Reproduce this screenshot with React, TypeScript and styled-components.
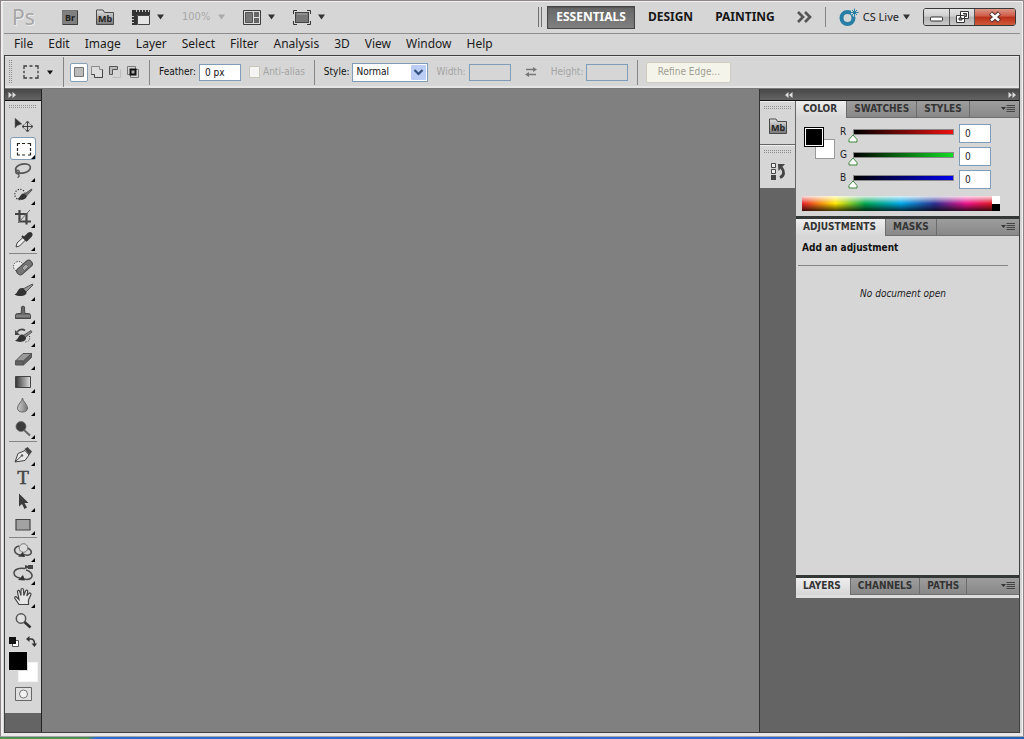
import React, { useState } from 'react';
import styled, { createGlobalStyle, css } from 'styled-components';

const ui = '"DejaVu Sans Condensed", "DejaVu Sans", Verdana, sans-serif';
const menuFont = '"Noto Sans", "Open Sans", Tahoma, sans-serif';

const GlobalStyle = createGlobalStyle`
  *, *::before, *::after { box-sizing: border-box; }
  body { margin: 0; background: #d6d6d6; color: #1b1b1b; font-family: ${ui}; font-size: 10px; }
  button, input, select { font: inherit; color: inherit; margin: 0; padding: 0; border: 0; background: none; border-radius: 0; }
  svg { display: block; flex: none; }
  h2, p { margin: 0; }
`;

/* ---------- window frame ---------- */

const Desktop = styled.div`
  min-height: 100vh;
  display: flex;
  flex-direction: column;
  padding-bottom: 2px;
  background: linear-gradient(90deg, #4f9153 0 88px, #2a6bd0 96px, #3468cf 84%, #1f62b8 94%);
`;

const Frame = styled.div`
  flex: 1;
  display: flex;
  flex-direction: column;
  padding: 2px 3px 3px 3px;
  background: #d6d6d6;
  border: 1px solid #8b8489;
  border-bottom-color: #a5a5a5;
  box-shadow: inset 0 1px 0 #f1f1f1, inset 2px 0 0 #efedee, inset -1px 0 0 #f2f2f2, inset 0 -3px 0 #e9e7e8;
`;

const TitleBar = styled.header`
  display: flex;
  align-items: center;
  justify-content: space-between;
  height: 31px;
  padding: 0 4px 2px 8px;
  border-bottom: 1px solid #8d8d8d;
`;

const TitleGroup = styled.div<{ $gap: number }>`
  display: flex;
  align-items: center;
  gap: ${p => p.$gap}px;
`;

const Logo = styled.span`
  width: 32px;
  font-family: ${menuFont};
  font-size: 21px;
  line-height: 24px;
  color: #a6a6a6;
  text-shadow: 1px 1px 0 #eee;
`;

const IconButton = styled.button`
  display: flex;
  align-items: center;
  gap: 7px;
`;

const SwapButton = styled(IconButton)`
  padding: 0 5px;
`;

const Zoom = styled.button`
  display: flex;
  align-items: center;
  gap: 8px;
  font-size: 11px;
  line-height: 16px;
  color: #a9a9a9;
`;

const WorkspaceButton = styled.button<{ $active?: boolean }>`
  height: 23px;
  padding: 0 8px;
  font-family: ${menuFont};
  font-size: 12px;
  line-height: 20px;
  font-weight: 700;
  color: #171717;
  border: 1px solid transparent;
  ${p => p.$active && css`
    color: #fff;
    border-color: #444;
    background: linear-gradient(#666, #808080);
    box-shadow: inset 0 1px 1px #555;
  `}
`;

const DoubleRule = styled.span`
  width: 4px;
  height: 20px;
  margin-right: 1px;
  border: solid #707070;
  border-width: 0 1px;
`;

const Rule = styled.span<{ $h: number }>`
  width: 1px;
  height: ${p => p.$h}px;
  background: #858585;
`;

const LiveButton = styled.button`
  display: flex;
  align-items: center;
  gap: 4px;
  font-family: ${menuFont};
  font-size: 11px;
  line-height: 18px;
`;

const WindowControls = styled.div`
  display: flex;
  height: 18px;
  border: 1px solid #383838;
  border-radius: 3px;
  overflow: hidden;
`;

const WindowButton = styled.button<{ $close?: boolean }>`
  display: grid;
  place-items: center;
  width: ${p => (p.$close ? 41 : 25)}px;
  background: ${p => (p.$close
    ? 'linear-gradient(#dc9686, #cf5a45 45%, #b92e18 50%, #d05a3c)'
    : 'linear-gradient(#e2e2e2, #cfcfcf 45%, #b2b2b2 50%, #c9c9c9)')};
  & + & { border-left: 1px solid #555; }
`;

const MenuBar = styled.nav`
  display: flex;
  align-items: center;
  gap: 15px;
  height: 21px;
  padding: 0 10px 2px;
  font-family: ${menuFont};
  font-size: 12px;
  line-height: 18px;
`;

const MenuItem = styled.button``;

/* ---------- options bar ---------- */

const Workspace = styled.div`
  flex: 1;
  display: flex;
  flex-direction: column;
  border: 1px solid #3f3f3f;
`;

const OptionsBar = styled.section`
  display: flex;
  align-items: center;
  gap: 6px;
  height: 33px;
  padding: 0 4px;
  border-bottom: 1px solid #7a7a7a;
  box-shadow: inset 0 1px 0 #e4e4e4, inset 0 -2px 0 #e4e4e4;
  line-height: 14px;
`;

const Grip = styled.span<{ $vertical?: boolean }>`
  width: ${p => (p.$vertical ? 4 : 28)}px;
  height: ${p => (p.$vertical ? 24 : 4)}px;
  background-image: linear-gradient(90deg, #8f8f8f 1px, transparent 1px);
  background-size: 2px 2px;
  -webkit-mask: repeating-linear-gradient(#000 0 1px, transparent 1px 2px);
  mask: repeating-linear-gradient(#000 0 1px, transparent 1px 2px);
`;

const Preset = styled.button`
  display: flex;
  align-items: center;
  justify-content: center;
  gap: 8px;
  width: 38px;
  height: 24px;
`;

const ModeGroup = styled.div`
  display: flex;
  padding-right: 1px;
`;

const ModeButton = styled.button<{ $active?: boolean }>`
  display: grid;
  place-items: center;
  width: 18px;
  height: 19px;
  border-radius: 2px;
  border: 1px solid ${p => (p.$active ? '#86a0b8' : 'transparent')};
  background: ${p => (p.$active ? '#fff' : 'none')};
`;

const FieldGroup = styled.div`
  display: flex;
  align-items: center;
  gap: 8px;
  padding: 0 3px;
`;

const Field = styled.label<{ $disabled?: boolean }>`
  display: flex;
  align-items: center;
  gap: 3px;
  color: ${p => (p.$disabled ? '#a4a4a4' : '#111')};
`;

const TextBox = styled.input`
  width: 42px;
  height: 17px;
  padding: 0 5px;
  background: #fff;
  border: 1px solid #7f9db9;
  color: #111;
  &:disabled { background: #d6d6d6; }
`;

const CheckBox = styled.input`
  appearance: none;
  width: 11px;
  height: 12px;
  background: #f4f4f2;
  border: 1px solid #cac8bb;
`;

const SelectWrap = styled.span`
  display: grid;
  align-items: center;
  width: 76px;
  height: 19px;
  background: #fff;
  border: 1px solid #7f9db9;
  & > * { grid-area: 1 / 1; }
  & > svg { justify-self: end; margin-right: 1px; pointer-events: none; }
`;

const Select = styled.select`
  appearance: none;
  width: 100%;
  height: 17px;
  padding: 0 20px 0 3px;
  color: #111;
`;

const RefineButton = styled.button`
  width: 85px;
  height: 21px;
  margin-left: 2px;
  background: #f5f4ea;
  border: 1px solid #cfcdbd;
  border-radius: 2px;
  color: #a09f93;
`;

/* ---------- main area ---------- */

const Main = styled.main`
  flex: 1;
  display: grid;
  grid-template-columns: 37px minmax(0, 1fr) 260px;
`;

const Canvas = styled.section`
  background: #808080;
`;

const ToolDock = styled.aside`
  background: #646464;
  border-right: 1px solid #222;
`;

const DockHeader = styled.button<{ $end?: boolean }>`
  display: flex;
  align-items: center;
  justify-content: ${p => (p.$end ? 'flex-end' : 'flex-start')};
  width: 100%;
  height: 12px;
  padding: 0 3px;
  background: linear-gradient(#484848, #636363);
  border-bottom: 1px solid #111;
`;

const ToolPanel = styled.div`
  display: flex;
  flex-direction: column;
  align-items: center;
  padding: 4px 0 12px;
  background: #d6d6d6;
`;

const ToolList = styled.div`
  display: flex;
  flex-direction: column;
  padding-top: 5px;
`;

const ToolButton = styled.button<{ $active?: boolean }>`
  width: 26px;
  height: 23px;
  border-radius: 3px;
  ${p => p.$active && css`
    background: #fff;
    box-shadow: inset 0 0 0 1px #809cb5;
  `}
`;

const ToolRule = styled.hr`
  width: 28px;
  height: 1px;
  margin: 1px -1px 2px;
  border: 0;
  background: #858585;
`;

const SwatchBar = styled.div`
  display: flex;
  justify-content: space-between;
  width: 28px;
  height: 19px;
  padding: 4px 0;
`;

const Swatches = styled.div<{ $small?: boolean }>`
  position: relative;
  width: ${p => (p.$small ? 31 : 30)}px;
  height: ${p => (p.$small ? 32 : 31)}px;
`;

const Swatch = styled.button<{ $front?: boolean; $outlined?: boolean }>`
  position: absolute;
  width: 20px;
  height: 20px;
  ${p => (p.$front
    ? css`top: 0; left: 0; background: #000; border: 1px solid #ddd;`
    : css`bottom: 0; right: 0; background: #fff; border: 1px solid ${p.$outlined ? '#999' : '#f4f4f4'};`)}
  ${p => p.$front && p.$outlined && css`border-color: #000; box-shadow: inset 0 0 0 1px #fff;`}
`;

const MaskButton = styled.button`
  margin-top: 5px;
`;

const RightDock = styled.aside`
  display: flex;
  flex-direction: column;
  background: #646464;
  border-left: 1px solid #333;
`;

const DockHeaders = styled.div`
  display: grid;
  grid-template-columns: 36px 1fr;
`;

const DockColumns = styled.div`
  display: grid;
  grid-template-columns: 35px minmax(0, 1fr);
  column-gap: 1px;
  align-items: start;
`;

const IconStrip = styled.div`
  display: flex;
  flex-direction: column;
  gap: 1px;
`;

const IconCell = styled.div`
  display: flex;
  flex-direction: column;
  align-items: center;
  gap: 8px;
  height: 43px;
  padding-top: 4px;
  background: #d6d6d6;
  border-top: 1px solid #f0f0f0;
`;

const Panels = styled.div`
  display: flex;
  flex-direction: column;
  gap: 3px;
  background: #333836;
`;

const Panel = styled.section`
  background: #d6d6d6;
`;

const TabRow = styled.div`
  display: flex;
  height: 17px;
  background: linear-gradient(#9d9d9d, #888);
  border-bottom: 1px solid #707070;
`;

const Tab = styled.button<{ $active?: boolean }>`
  height: 17px;
  padding: 0 7px 1px;
  font-weight: 700;
  line-height: 14px;
  color: #343434;
  border-right: 1px solid #6c6c6c;
  ${p => p.$active && css`background: linear-gradient(#eee, #d6d6d6); padding-right: 9px;`}
`;

const TabMenu = styled.button`
  margin-left: auto;
  padding-right: 4px;
`;

const ColorBody = styled.div`
  padding: 6px 19px 5px 6px;
`;

const ColorControls = styled.div`
  display: grid;
  grid-template-columns: 31px 1fr;
  gap: 5px;
  padding: 3px 9px 0 2px;
`;

const ChannelList = styled.div`
  display: flex;
  flex-direction: column;
`;

const Channel = styled.div`
  display: grid;
  grid-template-columns: 11px minmax(0, 1fr) 32px;
  column-gap: 4px;
  height: 23px;
  margin-top: -3px;
  margin-bottom: 3px;
`;

const ChannelLabel = styled.label`
  line-height: 15px;
`;

const SliderBox = styled.div<{ $color: string }>`
  position: relative;
  height: 15px;
  margin: 5px 1px 0 -2px;
  &::before {
    content: '';
    display: block;
    height: 6px;
    border: 1px solid #888;
    background: linear-gradient(90deg, #000, ${p => p.$color});
  }
`;

const Range = styled.input`
  position: absolute;
  inset: 0;
  width: 100%;
  height: 100%;
  opacity: 0;
`;

const Thumb = styled.svg`
  position: absolute;
  top: 5px;
  margin-left: -5px;
  pointer-events: none;
`;

const ChannelBox = styled.input`
  width: 32px;
  height: 19px;
  padding: 0 5px;
  background: #fff;
  border: 1px solid #7f9db9;
`;

const Spectrum = styled.div`
  display: flex;
  height: 15px;
  background:
    linear-gradient(rgba(255,255,255,.85), rgba(255,255,255,0) 50%, rgba(0,0,0,0) 50%, rgba(0,0,0,.75)),
    linear-gradient(90deg, #e8202a, #ffe800 17%, #00a651 32%, #00a9e8 50%, #2e3192 67%, #ec148c 83%, #e01a24 96%);
`;

const Extremes = styled.span`
  width: 8px;
  margin-left: auto;
  background: linear-gradient(#fff 50%, #000 50%);
`;

const AdjustmentBody = styled.div`
  min-height: 339px;
  padding: 4px 11px 0 2px;
`;

const AdjustmentTitle = styled.h2`
  padding: 0 4px 10px;
  font-size: 10px;
  line-height: 15px;
  color: #111;
  border-bottom: 1px solid #858585;
`;

const EmptyNote = styled.p`
  padding-top: 20px;
  line-height: 16px;
  font-style: italic;
  text-align: center;
`;

const LayersFoot = styled.div`
  height: 3px;
  background: #dedede;
`;

/* ---------- icons ---------- */

const Caret = ({ color = '#333', w = 7 }: { color?: string; w?: number }) => (
  <svg width={w} height={w - 1} viewBox="0 0 8 6" preserveAspectRatio="none"><path d="M0 .5h8L4 5.5z" fill={color} /></svg>
);

const DoubleArrow = ({ left }: { left?: boolean }) => (
  <svg width="8" height="6" viewBox="0 0 8 6">
    <path d={left ? 'M3.5 0v6L0 3zM7.5 0v6L4 3z' : 'M.5 0v6L4 3zM4.5 0v6L8 3z'} fill="#ddd" />
  </svg>
);

const BridgeIcon = () => (
  <svg width="16" height="15" viewBox="0 0 16 15">
    <rect x=".5" y=".5" width="15" height="14" fill="#808080" stroke="#777" />
    <path d="M1 14.5h14.5V1" fill="none" stroke="#3c3c3c" />
    <text x="8" y="11" textAnchor="middle" fontSize="9" fontWeight="700" fontFamily={menuFont} fill="#1e1e1e">Br</text>
  </svg>
);

const MiniBridgeIcon = () => (
  <svg width="18" height="17" viewBox="0 0 18 17">
    <defs><linearGradient id="mb" x2="0" y2="1"><stop stopColor="#e2e2e2" /><stop offset="1" stopColor="#777" /></linearGradient></defs>
    <path d="M.5 15.5V1h6.500l1.500 2.500h9v12z" fill="url(#mb)" stroke="#4a4a4a" />
    <text x="9" y="12.500" textAnchor="middle" fontSize="9" fontWeight="700" fontFamily={menuFont} fill="#222">Mb</text>
  </svg>
);

const ExtrasIcon = () => (
  <svg width="18" height="15" viewBox="0 0 18 15">
    <path d="M0 0h18v5H5v10H0z" fill="#333" />
    <path d="M5.500 5.500h12v9h-12z" fill="#e4e4e4" stroke="#444" />
    <path d="M4.500 0v2M7.500 0v2M10.500 0v2M13.500 0v2M16.500 0v2M0 6.500h2M0 9.500h2M0 12.500h2" stroke="#ccc" />
  </svg>
);

const ArrangeIcon = () => (
  <svg width="18" height="15" viewBox="0 0 18 15">
    <path d="M.5.500h17v14H.500z" fill="#dedede" stroke="#3b3b3b" />
    <path d="M2.500 2.500h7v10h-7z" fill="#777" stroke="#555" />
    <path d="M11 2h5v5h-5zM11 8h5v5h-5z" fill="#666" />
  </svg>
);

const ScreenIcon = () => (
  <svg width="18" height="15" viewBox="0 0 18 15">
    <path d="M.5 4V.500H4M14 .500h3.500V4M17.500 11v3.500H14M4 14.500H.500V11" fill="none" stroke="#333" />
    <rect x="2.500" y="2.500" width="13" height="10" fill="#777" stroke="#444" />
    <path d="M4 4h10" stroke="#aaa" />
  </svg>
);

const LiveIcon = () => (
  <svg width="20" height="19" viewBox="0 0 20 19">
    <circle cx="8.500" cy="10" r="6" fill="none" stroke="#287fa5" strokeWidth="4" />
    <path d="M15.500.500v8M12 4.500h7M13 2l5 5M18 2l-5 5" stroke="#d6d6d6" strokeWidth="3" />
    <path d="M15.500.500v8M12 4.500h7.500M13 2l5 5M18 2l-5 5" stroke="#287fa5" />
  </svg>
);

const MarqueeIcon = () => (
  <svg width="16" height="14" viewBox="0 0 16 14">
    <path d="M1 4V1h3M6.500 1h3M12 1h3v3M15 5.800v2.400M15 10v3h-3M9.500 13h-3M4 13H1v-3M1 8.200V5.800" fill="none" stroke="#3d3d3d" strokeWidth="1.300" />
  </svg>
);

const modeDefs = [
  { name: 'New selection', art: <path d="M2.500 2.500h9v9h-9z" fill="#bbb" stroke="#777" /> },
  { name: 'Add to selection', art: <><path d="M1.500 1.500h8v3h3v8h-8v-3h-3z" fill="#ddd" stroke="#8a8a8a" /><path d="M1.500 9.500h3v3h8v-8" fill="none" stroke="#444" /></> },
  { name: 'Subtract from selection', art: <><path d="M1.500 9.500v-8h8v3h-5v5z" fill="#bbb" stroke="#555" /><path d="M4.500 12.500h8v-8" fill="none" stroke="#bcbcbc" /></> },
  { name: 'Intersect with selection', art: <><path d="M1.500 1.500h8v8h-8zM4.500 4.500h8v8h-8z" fill="none" stroke="#777" /><path d="M4.500 4.500h5v5h-5z" fill="#aaa" stroke="#111" strokeWidth="2" /></> },
];

const TabMenuIcon = () => (
  <svg width="14" height="9" viewBox="0 0 14 9">
    <path d="M0 2h5L2.500 5z" fill="#333" /><path d="M5.500.500h8.500M5.500 2.500h8.500M5.500 4.500h8.500M5.500 6.500h8.500" stroke="#444" />
  </svg>
);

const HistoryIcon = () => (
  <svg width="16" height="18" viewBox="0 0 16 18">
    <path d="M1.500 1.500h4v4h-4zM1.500 7.500h4v4h-4z" fill="#f0f0f0" stroke="#444" />
    <path d="M1 13h5v5H1z" fill="#444" />
    <path d="M10 15.500c4.500-2 4.500-6 1.500-10" fill="none" stroke="#444" strokeWidth="2.800" />
    <path d="M8 2h7l-6.500 7z" fill="#444" />
  </svg>
);

const dark = '#3e3e3e';

const tools: ({ name: string; art: React.ReactNode; single?: boolean } | null)[] = [
  { name: 'Move', single: true, art: <><path d="M5 4v10l2.500-2.500L12 10z" fill="#333" stroke="#777" strokeWidth=".5" /><path d="M17.500 8v9M13 12.500h9" stroke={dark} strokeWidth="1.200" /><path d="M15.500 9.500l2-2.500 2 2.500M15.500 15.500l2 2.500 2-2.500M14.500 10.500l-2.500 2 2.500 2M20.500 10.500l2.500 2-2.500 2" fill="none" stroke={dark} /></> },
  { name: 'Rectangular Marquee', art: <path d="M7.500 9V6.500H10M12 6.500h3M17.500 6.500H20.500V9M20.500 11v3M20.500 15.500V18H18M15 18h-3M10 18H7.500v-2.500M7.500 14v-3" fill="none" stroke="#222" strokeWidth="1.200" /> },
  { name: 'Lasso', art: <><ellipse cx="13" cy="8.500" rx="7.500" ry="4.500" transform="rotate(-12 13 8.500)" fill="none" stroke="#555" strokeWidth="1.700" /><circle cx="7.500" cy="12" r="1.800" fill="none" stroke="#555" strokeWidth="1.300" /><path d="M8 13.500c2 2 1 3.500-.5 4" fill="none" stroke="#555" strokeWidth="1.300" /></> },
  { name: 'Quick Selection', art: <><circle cx="10" cy="11.500" r="5.200" fill="none" stroke="#333" strokeWidth="1.200" strokeDasharray="1.200 1.500" /><path d="M21.500 6l-7.500 5.500 2 2L22 7z" fill="#777" stroke="#444" strokeWidth=".8" /><path d="M14 10.500c-4-.5-3 4-7 5.500 5 2 10.500 0 9.500-3.500z" fill="#333" /></> },
  { name: 'Crop', art: <><path d="M9.500 4v11.500H21M5 8h11.500v10.500" fill="none" stroke="#444" strokeWidth="2.200" /><path d="M8 17L20 4" stroke="#666" /></> },
  { name: 'Eyedropper', art: <><path d="M6 18l1-4 6.500-6 2.500 2.500L9.500 17z" fill="#eee" stroke="#444" /><path d="M12 7l5 5M14.500 8.500l4-4c2.500-1.500 4 1 2.500 2.500l-4 4z" fill="#333" stroke="#333" strokeWidth="2" /></> },
  null,
  { name: 'Spot Healing Brush', art: <><circle cx="8.500" cy="10.500" r="5" fill="#eaeaea" stroke="#333" strokeDasharray="1.200 1.400" /><rect x="5.500" y="8" width="18" height="7" rx="3" transform="rotate(-41 14.500 11.500)" fill="#777" stroke="#4a4a4a" /><path d="M12 12l4-4 2.500 2.500-4 4z" fill="#aaa" stroke="#555" strokeWidth=".7" /></> },
  { name: 'Brush', art: <><path d="M22.500 5L13 10l2.500 3.500L23 6z" fill="#999" stroke="#555" /><path d="M13 9c-6-.5-4.500 5-8.500 6.500 5 3 12.500 1.500 12-2.500z" fill="#333" /></> },
  { name: 'Clone Stamp', art: <><path d="M5.500 13.500q0-2 2-2h3.500L11.500 8q-1-4 1.500-4t1.500 4l.5 3.500h3.500q2 0 2 2v3h-15z" fill="#686868" stroke="#474747" /><path d="M6 14h14" stroke="#999" /></> },
  { name: 'History Brush', art: <><path d="M21 5.500L12.500 11l2 2 7.500-6z" fill="#888" stroke="#444" strokeWidth=".8" /><path d="M13 9.500c-5-1-3.500 4.500-8 6 5 3 11.500 1 11-3z" fill="#333" /><path d="M7 7c3-3.500 6-3 8-1.500" fill="none" stroke="#444" strokeWidth="1.700" /><path d="M5 5v5h5z" fill="#444" /><path d="M19.500 11c1 4-1 6-5 6" fill="none" stroke="#333" strokeDasharray="1 1.500" /></> },
  { name: 'Eraser', art: <><path d="M5.500 13L13 5.500h8.500L13.500 13z" fill="#999" stroke="#555" /><path d="M5.500 13h8v4h-8zM13.500 13L21.500 5.500v4L13.500 17z" fill="#606060" stroke="#555" /></> },
  { name: 'Gradient', art: <><defs><linearGradient id="grad"><stop stopColor="#333" /><stop offset="1" stopColor="#e2e2e2" /></linearGradient></defs><path d="M5.500 5.500h15v11h-15z" fill="url(#grad)" stroke="#444" /></> },
  { name: 'Blur', art: <><defs><linearGradient id="drop"><stop stopColor="#ccc" /><stop offset="1" stopColor="#777" /></linearGradient></defs><path d="M12.500 4c0 3-5 6.500-5 10 0 2.500 2 4 5 4s5-1.500 5-4c0-3.500-5-7-5-10z" fill="url(#drop)" stroke="#666" /></> },
  { name: 'Dodge', art: <><path d="M14 13l6 5.500" stroke="#666" strokeWidth="2" /><circle cx="11" cy="9.500" r="5" fill="#3c3c3c" stroke="#666" strokeWidth=".7" /></> },
  null,
  { name: 'Pen', art: <><path d="M5 18l3-8.500 7-3 4 4.500-4 5.500z" fill="#e8e8e8" stroke="#444" /><path d="M5.500 17.500l6-5.500" stroke="#444" /><circle cx="12" cy="11.500" r="1.200" fill="#555" /><path d="M14.500 5l3-2 4.500 4.500L19.500 11z" fill="#444" /></> },
  { name: 'Type', art: <text x="13" y="17" textAnchor="middle" fontSize="19" fontFamily='"Liberation Serif", serif' fill="#444" stroke="#444" strokeWidth=".5">T</text> },
  { name: 'Path Selection', art: <path d="M9 3.500v13l3-2.500 2.500 5 2.500-1.500-2.500-4.500h4z" fill="#3c3c3c" /> },
  { name: 'Rectangle', art: <path d="M6 6.500h14v10.500H6z" fill="#a2a2a2" stroke="#444" strokeWidth="1.200" /> },
  null,
  { name: '3D Object Rotate', art: <><path d="M9 6c-6 1.500-6 7.500 1 9M17.500 8c6 3 5 9-4 6.500" fill="none" stroke="#4b4b4b" strokeWidth="1.600" /><circle cx="13.500" cy="8" r="4.300" fill="#ddd" stroke="#777" /><path d="M8 16.500l5-4.500 2 5z" fill="#333" /></> },
  { name: '3D Camera Rotate', art: <><path d="M15 5.500c-7-1-11 1.500-11 4.500 0 2.500 2.500 4.500 6 5M14 16c6 1.500 10-2 7-6-1-1.500-3-2.500-5-3" fill="none" stroke="#4b4b4b" strokeWidth="1.500" /><path d="M8 17l5-5 2 5.500z" fill="#333" /><path d="M15 2l3 1V2h5v4h-5V5l-3 1z" fill="#444" /></> },
  { name: 'Hand', art: <path d="M9 18.500l-4-6c-1-2 1-2.500 2-1l2 2L7.500 6c-.3-2 2-2 2.300-.3L11 9.500 11 4c0-2 2.300-2 2.500 0l.3 5.500L15.500 5c.5-1.700 2.500-1 2.200.6L16.800 10l2-2.500c1.200-1.200 2.700 0 2 1.500L18.500 14v4.500z" fill="#e6e6e6" stroke="#444" strokeWidth="1.200" /> },
  { name: 'Zoom', single: true, art: <><circle cx="11" cy="9.500" r="4.700" fill="#e2e2e2" stroke="#555" strokeWidth="1.500" /><path d="M14.500 13l6 5.500" stroke="#333" strokeWidth="2.600" /></> },
];

/* ---------- parts ---------- */

const menus = ['File', 'Edit', 'Image', 'Layer', 'Select', 'Filter', 'Analysis', '3D', 'View', 'Window', 'Help'];

function ColorChannel({ name, color }: { name: string; color: string }) {
  const [value, setValue] = useState(0);
  const id = `channel-${name}`;
  return (
    <Channel>
      <ChannelLabel htmlFor={id}>{name}</ChannelLabel>
      <SliderBox $color={color}>
        <Range type="range" min={0} max={255} value={value} aria-label={`${name} slider`} onChange={e => setValue(Number(e.target.value))} />
        <Thumb width="10" height="9" viewBox="0 0 10 9" style={{ left: `${(value / 255) * 100}%` }}>
          <path d="M5 1L9 5.500V8H1V5.500z" fill="#fff" stroke="#3b853c" />
        </Thumb>
      </SliderBox>
      <ChannelBox id={id} value={value} onChange={e => setValue(Math.min(255, Number(e.target.value) || 0))} />
    </Channel>
  );
}

function Tabs({ names }: { names: string[] }) {
  return (
    <TabRow role="tablist">
      {names.map((n, i) => <Tab key={n} role="tab" aria-selected={i === 0} $active={i === 0}>{n}</Tab>)}
      <TabMenu aria-label="Panel menu"><TabMenuIcon /></TabMenu>
    </TabRow>
  );
}

export default function App() {
  const [tool, setTool] = useState('Rectangular Marquee');
  const [mode, setMode] = useState('New selection');
  return (
    <Desktop>
      <GlobalStyle />
      <Frame>
        <TitleBar>
          <TitleGroup $gap={18}>
            <Logo>Ps</Logo>
            <IconButton aria-label="Launch Bridge"><BridgeIcon /></IconButton>
            <IconButton aria-label="Launch Mini Bridge"><MiniBridgeIcon /></IconButton>
            <IconButton aria-label="View extras"><ExtrasIcon /><Caret /></IconButton>
            <Zoom>100% <Caret color="#aaa" /></Zoom>
            <IconButton aria-label="Arrange documents"><ArrangeIcon /><Caret /></IconButton>
            <IconButton aria-label="Screen mode"><ScreenIcon /><Caret /></IconButton>
          </TitleGroup>
          <TitleGroup $gap={13}>
            <TitleGroup $gap={4}>
              <DoubleRule />
              <WorkspaceButton $active>ESSENTIALS</WorkspaceButton>
              <WorkspaceButton>DESIGN</WorkspaceButton>
              <WorkspaceButton>PAINTING</WorkspaceButton>
            </TitleGroup>
            <IconButton aria-label="More workspaces">
              <svg width="15" height="12" viewBox="0 0 15 12"><path d="M1 1l5 5-5 5M8 1l5 5-5 5" fill="none" stroke="#555" strokeWidth="2.700" /></svg>
            </IconButton>
            <Rule $h={20} />
            <LiveButton><LiveIcon />CS Live<Caret /></LiveButton>
            <WindowControls>
              <WindowButton aria-label="Minimize">
                <svg width="13" height="9" viewBox="0 0 13 9"><rect x=".5" y="4" width="12" height="4" rx="1" fill="#fff" stroke="#333" /></svg>
              </WindowButton>
              <WindowButton aria-label="Restore">
                <svg width="13" height="12" viewBox="0 0 13 12"><path d="M4.500.500h8v7h-8zM.500 4.500h8v7h-8z" fill="#fff" stroke="#333" /><path d="M3 7h3v2H3zM7 2.500h3.500v3H9" fill="#888" stroke="#333" /></svg>
              </WindowButton>
              <WindowButton $close aria-label="Close">
                <svg width="14" height="12" viewBox="0 0 14 12"><path d="M2.500 2l9 8M11.500 2l-9 8" stroke="#503030" strokeWidth="4.500" /><path d="M3 2.500l8 7M11 2.500l-8 7" stroke="#fff" strokeWidth="2.500" /></svg>
              </WindowButton>
            </WindowControls>
          </TitleGroup>
        </TitleBar>

        <MenuBar aria-label="Main menu">{menus.map(m => <MenuItem key={m}>{m}</MenuItem>)}</MenuBar>

        <Workspace>
          <OptionsBar aria-label="Tool options">
            <Grip $vertical />
            <Preset aria-label="Tool preset"><MarqueeIcon /><Caret w={6} color="#111" /></Preset>
            <Rule $h={30} />
            <ModeGroup>
              {modeDefs.map(m => (
                <ModeButton key={m.name} aria-label={m.name} $active={mode === m.name} onClick={() => setMode(m.name)}>
                  <svg width="14" height="14" viewBox="0 0 14 14">{m.art}</svg>
                </ModeButton>
              ))}
            </ModeGroup>
            <Rule $h={25} />
            <FieldGroup>
              <Field>Feather: <TextBox defaultValue="0 px" /></Field>
              <Field $disabled><CheckBox type="checkbox" disabled /> Anti-alias</Field>
            </FieldGroup>
            <Rule $h={25} />
            <FieldGroup>
              <Field>Style:
                <SelectWrap>
                  <Select defaultValue="Normal"><option>Normal</option><option>Fixed Ratio</option><option>Fixed Size</option></Select>
                  <svg width="15" height="15" viewBox="0 0 15 15"><rect width="15" height="15" rx="1" fill="#bccdf5" /><path d="M3.500 5l4 4 4-4" fill="none" stroke="#33507f" strokeWidth="2.200" /></svg>
                </SelectWrap>
              </Field>
              <Field $disabled>Width: <TextBox disabled /></Field>
            </FieldGroup>
            <SwapButton aria-label="Swap width and height" disabled>
              <svg width="12" height="10" viewBox="0 0 12 10"><path d="M1 2.500h8M3 7.500h8" stroke="#777" strokeWidth="1.300" /><path d="M8 0l4 2.500L8 5zM4 5L0 7.500 4 10z" fill="#777" /></svg>
            </SwapButton>
            <FieldGroup>
              <Field $disabled>Height: <TextBox disabled /></Field>
            </FieldGroup>
            <Rule $h={25} />
            <RefineButton disabled>Refine Edge...</RefineButton>
          </OptionsBar>

          <Main>
            <ToolDock aria-label="Tools">
              <DockHeader aria-label="Expand tools"><DoubleArrow /></DockHeader>
              <ToolPanel>
                <Grip />
                <ToolList>
                  {tools.map((t, i) => (t === null ? <ToolRule key={i} /> : (
                    <ToolButton key={t.name} aria-label={t.name} $active={tool === t.name} onClick={() => setTool(t.name)}>
                      <svg width="26" height="23" viewBox="0 0 26 23">
                        {t.art}
                        {!t.single && <path d="M25 18v4h-4z" fill="#000" />}
                      </svg>
                    </ToolButton>
                  )))}
                </ToolList>
                <SwatchBar>
                  <IconButton aria-label="Default colors">
                    <svg width="10" height="10" viewBox="0 0 10 10"><path d="M3.500 3.500h6v6h-6z" fill="#fff" stroke="#555" /><path d="M0 0h7v7H0z" fill="#111" /></svg>
                  </IconButton>
                  <IconButton aria-label="Swap colors">
                    <svg width="11" height="11" viewBox="0 0 11 11"><path d="M2 3h3q3.500 0 3.500 5" fill="none" stroke="#333" strokeWidth="1.500" /><path d="M3.500 0v6L0 3zM5.500 7.500h5.500L8.500 11z" fill="#333" /></svg>
                  </IconButton>
                </SwatchBar>
                <Swatches>
                  <Swatch aria-label="Background color" />
                  <Swatch $front aria-label="Foreground color" />
                </Swatches>
                <MaskButton aria-label="Quick mask">
                  <svg width="17" height="14" viewBox="0 0 17 14"><path d="M.5.500h16v13H.500z" fill="#e0e0e0" stroke="#666" /><circle cx="8.500" cy="7" r="4" fill="#f2f2f2" stroke="#777" /></svg>
                </MaskButton>
              </ToolPanel>
            </ToolDock>

            <Canvas aria-label="Document area" />

            <RightDock>
              <DockHeaders>
                <DockHeader $end aria-label="Expand dock"><DoubleArrow left /></DockHeader>
                <DockHeader $end aria-label="Collapse panels"><DoubleArrow /></DockHeader>
              </DockHeaders>
              <DockColumns>
                <IconStrip>
                  <IconCell><Grip /><IconButton aria-label="Mini Bridge"><MiniBridgeIcon /></IconButton></IconCell>
                  <IconCell><Grip /><IconButton aria-label="History"><HistoryIcon /></IconButton></IconCell>
                </IconStrip>
                <Panels>
                  <Panel>
                    <Tabs names={['COLOR', 'SWATCHES', 'STYLES']} />
                    <ColorBody>
                      <ColorControls>
                        <Swatches $small>
                          <Swatch $outlined aria-label="Panel background color" />
                          <Swatch $front $outlined aria-label="Panel foreground color" />
                        </Swatches>
                        <ChannelList>
                          <ColorChannel name="R" color="#e11" />
                          <ColorChannel name="G" color="#1d2" />
                          <ColorChannel name="B" color="#00e" />
                        </ChannelList>
                      </ColorControls>
                      <Spectrum><Extremes /></Spectrum>
                    </ColorBody>
                  </Panel>
                  <Panel>
                    <Tabs names={['ADJUSTMENTS', 'MASKS']} />
                    <AdjustmentBody>
                      <AdjustmentTitle>Add an adjustment</AdjustmentTitle>
                      <EmptyNote>No document open</EmptyNote>
                    </AdjustmentBody>
                  </Panel>
                  <Panel>
                    <Tabs names={['LAYERS', 'CHANNELS', 'PATHS']} />
                    <LayersFoot />
                  </Panel>
                </Panels>
              </DockColumns>
            </RightDock>
          </Main>
        </Workspace>
      </Frame>
    </Desktop>
  );
}
